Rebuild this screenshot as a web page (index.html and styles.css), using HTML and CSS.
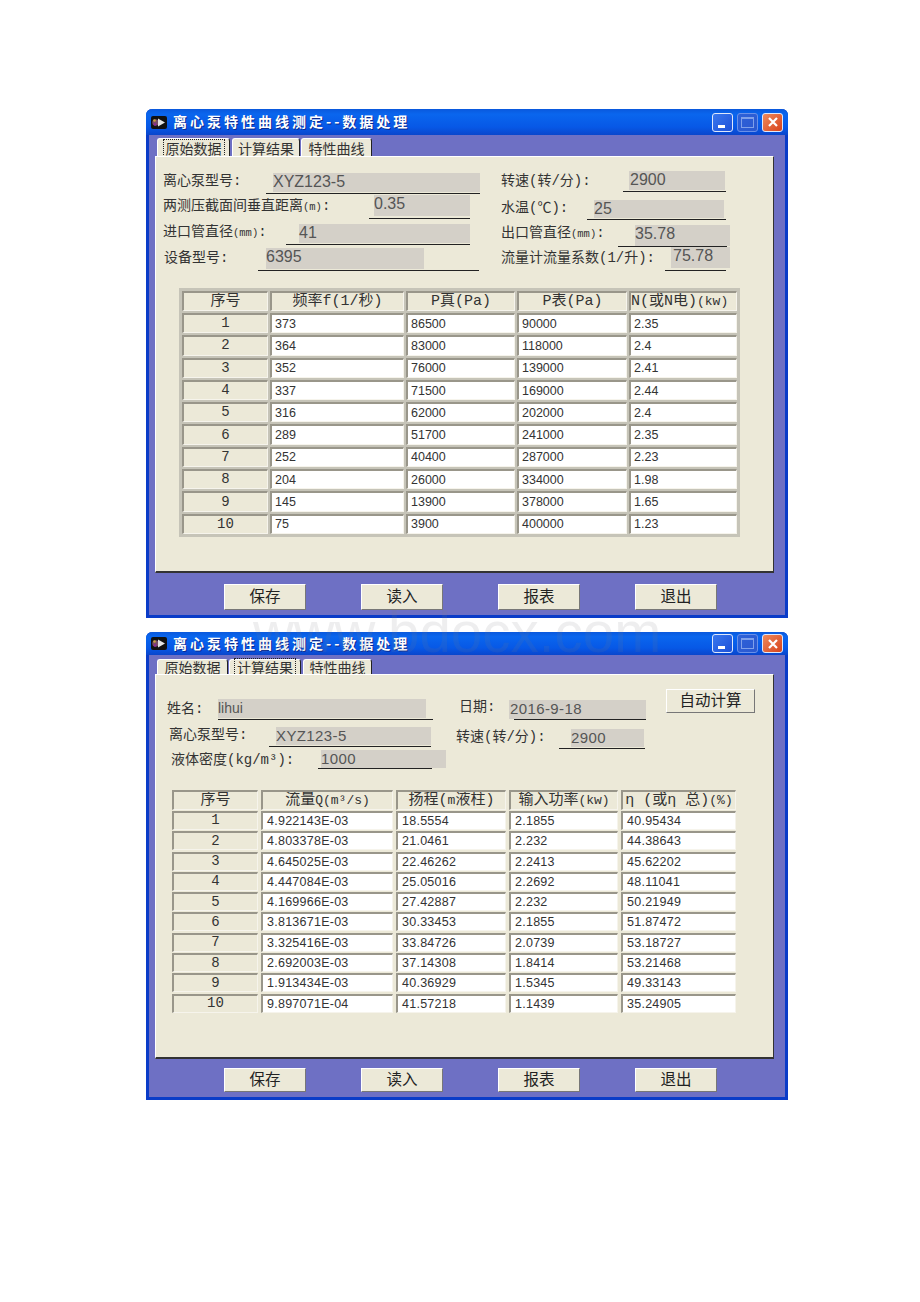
FILE: index.html
```html
<!DOCTYPE html>
<html lang="zh-CN">
<head>
  <meta charset="UTF-8" />
  <title>离心泵特性曲线测定</title>
  <link rel="stylesheet" href="styles.css">
</head>
<body>

  <div class="watermark">www.bdocx.com</div>

  <!-- window 1: raw data -->
  <div class="window win-raw">
    <div class="titlebar">
      <svg class="app-icon" viewBox="0 0 16 15" width="16" height="15">
        <rect x="0" y="1" width="16" height="13" rx="2" fill="#111"/>
        <circle cx="4.5" cy="7.5" r="3.2" fill="#7a4a66"/>
        <circle cx="3.5" cy="5.5" r="1.3" fill="#c9a23a"/>
        <circle cx="4" cy="9.5" r="1.2" fill="#8a2a9a"/>
        <path d="M7 3.5 L14 7.5 L7 11.5 Z" fill="#e4e4e4"/>
      </svg>
      <span class="title">离心泵特性曲线测定--数据处理</span>
      <div class="caption-btns">
        <div class="cap cap-min"><i></i></div>
        <div class="cap cap-max"><i></i></div>
        <div class="cap cap-close">
          <svg viewBox="0 0 12 12" width="12" height="12"><path d="M2 2 L10 10 M10 2 L2 10" stroke="#fff" stroke-width="2.2"/></svg>
        </div>
      </div>
    </div>
    <div class="tabs">
      <div class="tab tab-a active"><span>原始数据</span></div>
      <div class="tab tab-b"><span>计算结果</span></div>
      <div class="tab tab-c"><span>特性曲线</span></div>
    </div>
    <div class="panel">
      <div class="form">
        <div class="col col-left">
          <div class="field r1">
            <label>离心泵型号:</label>
            <div class="line"><div class="box">XYZ123-5</div></div>
          </div>
          <div class="field r2">
            <label>两测压截面间垂直距离<small>(m)</small>:</label>
            <div class="line"><div class="box">0.35</div></div>
          </div>
          <div class="field r3">
            <label>进口管直径<small>(mm)</small>:</label>
            <div class="line"><div class="box">41</div></div>
          </div>
          <div class="field r4">
            <label>设备型号:</label>
            <div class="line"><div class="box">6395</div></div>
          </div>
        </div>
        <div class="col col-right">
          <div class="field r5">
            <label>转速(转/分):</label>
            <div class="line"><div class="box">2900</div></div>
          </div>
          <div class="field r6">
            <label>水温(℃):</label>
            <div class="line"><div class="box">25</div></div>
          </div>
          <div class="field r7">
            <label>出口管直径<small>(mm)</small>:</label>
            <div class="line"><div class="box">35.78</div></div>
          </div>
          <div class="field r8">
            <label>流量计流量系数(1/升):</label>
            <div class="line"><div class="box">75.78</div></div>
          </div>
        </div>
      </div>
      <div class="grid grid-raw">
        <div class="head">序号</div><div class="head">频率f(1/秒)</div><div class="head">P真(Pa)</div><div class="head">P表(Pa)</div><div class="head head-tight">N(或N电)<small>(kw)</small></div>
        <div class="idx">1</div><div class="cell">373</div><div class="cell">86500</div><div class="cell">90000</div><div class="cell">2.35</div>
        <div class="idx">2</div><div class="cell">364</div><div class="cell">83000</div><div class="cell">118000</div><div class="cell">2.4</div>
        <div class="idx">3</div><div class="cell">352</div><div class="cell">76000</div><div class="cell">139000</div><div class="cell">2.41</div>
        <div class="idx">4</div><div class="cell">337</div><div class="cell">71500</div><div class="cell">169000</div><div class="cell">2.44</div>
        <div class="idx">5</div><div class="cell">316</div><div class="cell">62000</div><div class="cell">202000</div><div class="cell">2.4</div>
        <div class="idx">6</div><div class="cell">289</div><div class="cell">51700</div><div class="cell">241000</div><div class="cell">2.35</div>
        <div class="idx">7</div><div class="cell">252</div><div class="cell">40400</div><div class="cell">287000</div><div class="cell">2.23</div>
        <div class="idx">8</div><div class="cell">204</div><div class="cell">26000</div><div class="cell">334000</div><div class="cell">1.98</div>
        <div class="idx">9</div><div class="cell">145</div><div class="cell">13900</div><div class="cell">378000</div><div class="cell">1.65</div>
        <div class="idx">10</div><div class="cell">75</div><div class="cell">3900</div><div class="cell">400000</div><div class="cell">1.23</div>
      </div>
    </div>
    <div class="actions">
      <button class="btn">保存</button>
      <button class="btn">读入</button>
      <button class="btn">报表</button>
      <button class="btn">退出</button>
    </div>
  </div>

  <!-- window 2: results -->
  <div class="window win-calc">
    <div class="titlebar">
      <svg class="app-icon" viewBox="0 0 16 15" width="16" height="15">
        <rect x="0" y="1" width="16" height="13" rx="2" fill="#111"/>
        <circle cx="4.5" cy="7.5" r="3.2" fill="#7a4a66"/>
        <circle cx="3.5" cy="5.5" r="1.3" fill="#c9a23a"/>
        <circle cx="4" cy="9.5" r="1.2" fill="#8a2a9a"/>
        <path d="M7 3.5 L14 7.5 L7 11.5 Z" fill="#e4e4e4"/>
      </svg>
      <span class="title">离心泵特性曲线测定--数据处理</span>
      <div class="caption-btns">
        <div class="cap cap-min"><i></i></div>
        <div class="cap cap-max"><i></i></div>
        <div class="cap cap-close">
          <svg viewBox="0 0 12 12" width="12" height="12"><path d="M2 2 L10 10 M10 2 L2 10" stroke="#fff" stroke-width="2.2"/></svg>
        </div>
      </div>
    </div>
    <div class="tabs">
      <div class="tab tab-a"><span>原始数据</span></div>
      <div class="tab tab-b active"><span>计算结果</span></div>
      <div class="tab tab-c"><span>特性曲线</span></div>
    </div>
    <div class="panel">
      <div class="form">
        <div class="col col-left">
          <div class="field c1">
            <label>姓名:</label>
            <div class="line"><div class="box box-small">lihui</div></div>
          </div>
          <div class="field c2">
            <label>离心泵型号:</label>
            <div class="line"><div class="box box-mid">XYZ123-5</div></div>
          </div>
          <div class="field c3">
            <label>液体密度(kg/m³):</label>
            <div class="line"><div class="box box-mid">1000</div></div>
          </div>
        </div>
        <div class="col col-right">
          <div class="field c4">
            <label>日期:</label>
            <div class="line"><div class="box box-mid">2016-9-18</div></div>
          </div>
          <div class="field c5">
            <label>转速(转/分):</label>
            <div class="line"><div class="box box-mid">2900</div></div>
          </div>
        </div>
        <button class="btn btn-auto">自动计算</button>
      </div>
      <div class="grid grid-calc">
        <div class="head">序号</div><div class="head">流量<small>Q(m³/s)</small></div><div class="head">扬程(<small>m</small>液柱)</div><div class="head">输入功率<small>(kw)</small></div><div class="head">η (或η 总)<small>(%)</small></div>
        <div class="idx">1</div><div class="cell">4.922143E-03</div><div class="cell">18.5554</div><div class="cell">2.1855</div><div class="cell">40.95434</div>
        <div class="idx">2</div><div class="cell">4.803378E-03</div><div class="cell">21.0461</div><div class="cell">2.232</div><div class="cell">44.38643</div>
        <div class="idx">3</div><div class="cell">4.645025E-03</div><div class="cell">22.46262</div><div class="cell">2.2413</div><div class="cell">45.62202</div>
        <div class="idx">4</div><div class="cell">4.447084E-03</div><div class="cell">25.05016</div><div class="cell">2.2692</div><div class="cell">48.11041</div>
        <div class="idx">5</div><div class="cell">4.169966E-03</div><div class="cell">27.42887</div><div class="cell">2.232</div><div class="cell">50.21949</div>
        <div class="idx">6</div><div class="cell">3.813671E-03</div><div class="cell">30.33453</div><div class="cell">2.1855</div><div class="cell">51.87472</div>
        <div class="idx">7</div><div class="cell">3.325416E-03</div><div class="cell">33.84726</div><div class="cell">2.0739</div><div class="cell">53.18727</div>
        <div class="idx">8</div><div class="cell">2.692003E-03</div><div class="cell">37.14308</div><div class="cell">1.8414</div><div class="cell">53.21468</div>
        <div class="idx">9</div><div class="cell">1.913434E-03</div><div class="cell">40.36929</div><div class="cell">1.5345</div><div class="cell">49.33143</div>
        <div class="idx">10</div><div class="cell">9.897071E-04</div><div class="cell">41.57218</div><div class="cell">1.1439</div><div class="cell">35.24905</div>
      </div>
    </div>
    <div class="actions">
      <button class="btn">保存</button>
      <button class="btn">读入</button>
      <button class="btn">报表</button>
      <button class="btn">退出</button>
    </div>
  </div>

</body>
</html>
```

FILE: styles.css
```css
html, body {
  margin: 0;
  height: 1302px;
  overflow: hidden;
}
body {
  background: #fff;
  padding: 109px 0 0 146px;
  box-sizing: border-box;
  position: relative;
  font-family: "Liberation Mono", "Noto Sans CJK SC", monospace;
  color: #222;
}
.watermark {
  position: absolute;
  left: 253px;
  top: 610px;
  font: 56.5px/46px "Liberation Sans", sans-serif;
  color: rgba(120,120,130,0.13);
  z-index: 5;
}

/* window frame */
.window {
  width: 642px;
  box-sizing: border-box;
  background: #6e70c4;
  border: 3px solid #0a3cc8;
  border-top: none;
  border-radius: 6px 6px 0 0;
  display: flex;
  flex-direction: column;
}
.win-raw { height: 509px; }
.win-calc { height: 468px; margin-top: 14px; }

.titlebar {
  display: flex;
  align-items: center;
  margin: 0 -3px;
  padding: 0 5px;
  background: linear-gradient(#0a58dc, #0a66ee 20%, #0758e6 70%, #0a46cc);
  border-radius: 6px 6px 0 0;
  flex: none;
}
.win-raw .titlebar { height: 26px; }
.win-calc .titlebar { height: 23px; }
.app-icon { flex: none; }
.title {
  margin-left: 6px;
  padding-bottom: 2px;
  font: bold 14px "Noto Sans CJK SC", sans-serif;
  letter-spacing: 3px;
  color: #fff;
  text-shadow: 1px 1px 0 #0a2a90;
}
.caption-btns {
  margin-left: auto;
  display: flex;
  gap: 4px;
}
.cap {
  width: 21px;
  height: 19px;
  box-sizing: border-box;
  border: 1px solid #dfe8fb;
  border-radius: 3px;
  display: flex;
  align-items: center;
  justify-content: center;
  position: relative;
}
.cap-min { background: linear-gradient(135deg, #3a78ee, #1c50d8); }
.cap-min i {
  position: absolute;
  left: 5px;
  bottom: 3px;
  width: 7px;
  height: 3px;
  background: #fff;
}
.cap-max {
  background: linear-gradient(135deg, #2f62d8, #2a58d0);
  border-color: #6a90e8;
}
.cap-max i {
  width: 11px;
  height: 8px;
  border: 1px solid #7fa0ea;
  border-top-width: 2px;
}
.cap-close { background: linear-gradient(135deg, #ee8a5c, #d8431c); }

/* tabs */
.tabs {
  display: flex;
  align-items: flex-end;
  margin-left: 8px;
  flex: none;
  font: 14px "Noto Sans CJK SC", sans-serif;
}
.win-raw .tabs { height: 21px; }
.win-calc .tabs { height: 19px; }
.tab {
  height: 18px;
  box-sizing: border-box;
  background: #ece9d8;
  border-top: 1px solid #fff;
  border-left: 1px solid #fff;
  border-right: 1px solid #222;
  border-radius: 3px 3px 0 0;
  display: flex;
  align-items: center;
  justify-content: center;
  line-height: 14px;
  color: #333;
}
.win-calc .tab { height: 15px; }
.tab-a { width: 73px; margin-right: 2px; }
.tab-b { width: 68px; margin-right: 1px; }
.tab-c { width: 71px; }
.win-calc .tab-a { width: 71px; margin-right: 1px; }
.win-calc .tab-b { width: 72px; margin-right: 2px; }
.win-calc .tab-c { width: 69px; }
.tab.active span {
  outline: 1px dotted #222;
  outline-offset: 0;
  padding: 1px 2px;
}

/* main panel */
.panel {
  width: 619px;
  margin-left: 6px;
  box-sizing: border-box;
  background: #ece9d8;
  border-top: 1px solid #fff;
  border-left: 1px solid #fff;
  border-right: 1px solid #333;
  border-bottom: 2px solid #333;
  flex: none;
}
.win-raw .panel { height: 417px; }
.win-calc .panel { height: 385px; }

/* fields */
.form {
  display: flex;
  align-items: flex-start;
  font: 14px "Liberation Mono", "Noto Sans CJK SC", monospace;
  color: #333;
}
.win-raw .form { height: 131px; padding: 16px 0 0 7px; box-sizing: border-box; }
.win-calc .form { height: 115px; padding: 24px 0 0 11px; box-sizing: border-box; }
.col { display: flex; flex-direction: column; }
.win-raw .col-left { width: 338px; }
.win-raw .col-right { margin-top: -2px; }
.win-calc .col-left { width: 289px; }
.field { display: flex; align-items: center; }
.field label {
  display: block;
  box-sizing: border-box;
  flex: none;
  padding-bottom: 3px;
  line-height: 14px;
  white-space: nowrap;
}
.field small {
  font-size: 10.5px;
}
.line {
  flex: none;
  border-bottom: 1px solid #222;
  display: flex;
  align-items: flex-start;
}
.box {
  flex: none;
  background: #d4d0c8;
  font: 16px/18px "Liberation Sans", sans-serif;
  color: #555;
}
.box-small { font-size: 14px; }
.box-mid { font-size: 15px; letter-spacing: 0.4px; }

.r1 label { width: 103px; padding-bottom: 5px; }
.r1 .line { width: 207px; height: 20px; padding-left: 7px; }
.r1 .box { width: 207px; height: 19px; }
.r2 { margin-top: 1px; }
.r2 label { width: 206px; padding-bottom: 1px; }
.r2 .line { width: 96px; height: 23px; padding-left: 5px; }
.r2 .box { width: 96px; height: 21px; }
.r3 { margin-top: 5px; }
.r3 label { width: 123px; padding-bottom: 4px; }
.r3 .line { width: 171px; height: 20px; padding-left: 13px; }
.r3 .box { width: 171px; height: 19px; }
.r4 { margin-top: 3px; }
.r4 label { width: 95px; padding-left: 1px; }
.r4 .line { width: 213px; height: 22px; padding-left: 8px; }
.r4 .box { width: 158px; height: 21px; }

.r5 label { width: 122px; padding-bottom: 1px; }
.r5 .line { width: 97px; height: 20px; padding-left: 6px; }
.r5 .box { width: 96px; height: 19px; padding-left: 1px; box-sizing: border-box; }
.r6 { margin-top: 8px; }
.r6 label { width: 86px; padding-bottom: 4px; }
.r6 .line { width: 132px; height: 19px; padding-left: 7px; }
.r6 .box { width: 130px; height: 18px; }
.r7 { margin-top: 5px; }
.r7 label { width: 117px; padding-bottom: 5px; }
.r7 .line { width: 92px; height: 21px; padding-left: 17px; }
.r7 .box { width: 95px; height: 21px; }
.r8 label { width: 164px; }
.r8 .line { width: 55px; height: 23px; padding-left: 6px; }
.r8 .box { width: 59px; height: 21px; padding-left: 2px; box-sizing: border-box; }

.c1 label { width: 51px; padding-bottom: 1px; }
.c1 .line { width: 215px; height: 20px; }
.c1 .box { width: 208px; height: 19px; }
.c2 { margin-top: 7px; }
.c2 label { width: 102px; padding-left: 2px; padding-bottom: 5px; }
.c2 .line { width: 155px; height: 19px; padding-left: 7px; }
.c2 .box { width: 155px; height: 18px; }
.c3 { margin-top: 3px; }
.c3 label { width: 151px; padding-left: 4px; padding-bottom: 0; }
.c3 .line { width: 111px; height: 18px; padding-left: 3px; }
.c3 .box { width: 125px; height: 18px; }

.col-right .c4 { margin-top: 1px; }
.c4 label { width: 58px; padding-left: 3px; padding-bottom: 6px; }
.c4 .line { width: 132px; height: 19px; }
.c4 .box { width: 137px; height: 19px; margin-left: -5px; padding-left: 1px; box-sizing: border-box; }
.c5 { margin-top: 9px; }
.c5 label { width: 103px; padding-bottom: 5px; }
.c5 .line { width: 74px; height: 19px; padding-left: 12px; }
.c5 .box { width: 73px; height: 18px; }

/* grids */
.grid {
  display: grid;
  box-sizing: border-box;
  font: 12.5px "Liberation Sans", sans-serif;
}
.grid-raw {
  width: 561px;
  margin-left: 23px;
  padding: 3px 2px 3px 3px;
  background: #c6c4b8;
  grid-template-columns: 86px 134px 109px 110px 108px;
  grid-template-rows: 20px repeat(10, 20.3px);
  gap: 2px;
}
.grid-calc {
  margin-left: 16px;
  width: 570px;
  grid-template-columns: 86px 132px 110px 109px 115px;
  grid-template-rows: 19.7px repeat(10, 19px);
  column-gap: 3px;
  row-gap: 1.3px;
}
.grid-calc .cell { padding-left: 4px; letter-spacing: 0.25px; }
.head, .idx, .cell {
  box-sizing: border-box;
  border-top: 2px solid #99968a;
  border-left: 2px solid #99968a;
  border-bottom: 1px solid #f6f4ec;
  border-right: 1px solid #f6f4ec;
  display: flex;
  align-items: center;
  overflow: hidden;
  white-space: pre;
}
.head, .idx {
  background: #ece9d8;
  justify-content: center;
  font: 15px/15px "Liberation Mono", "Noto Sans CJK SC", monospace;
  color: #333;
}
.head small { font-size: 13px; }
.head-tight { justify-content: flex-start; }
.idx { font-size: 14px; }
.cell {
  background: #fff;
  padding-left: 3px;
  color: #333;
}

/* bottom buttons */
.btn {
  width: 82px;
  height: 26px;
  padding: 0 0 4px;
  box-sizing: border-box;
  background: #ece9d8;
  border: 1px solid;
  border-color: #fff #777 #777 #fff;
  font: 15.5px/18px "Noto Sans CJK SC", sans-serif;
  color: #222;
  border-radius: 0;
}
.actions {
  display: flex;
  gap: 55px;
  padding-left: 75px;
}
.win-raw .actions { margin-top: 11px; }
.win-calc .actions { margin-top: 9px; }
.win-calc .actions .btn { height: 24px; }
.btn-auto {
  width: 89px;
  height: 24px;
  margin: -10px 0 0 20px;
}
```
